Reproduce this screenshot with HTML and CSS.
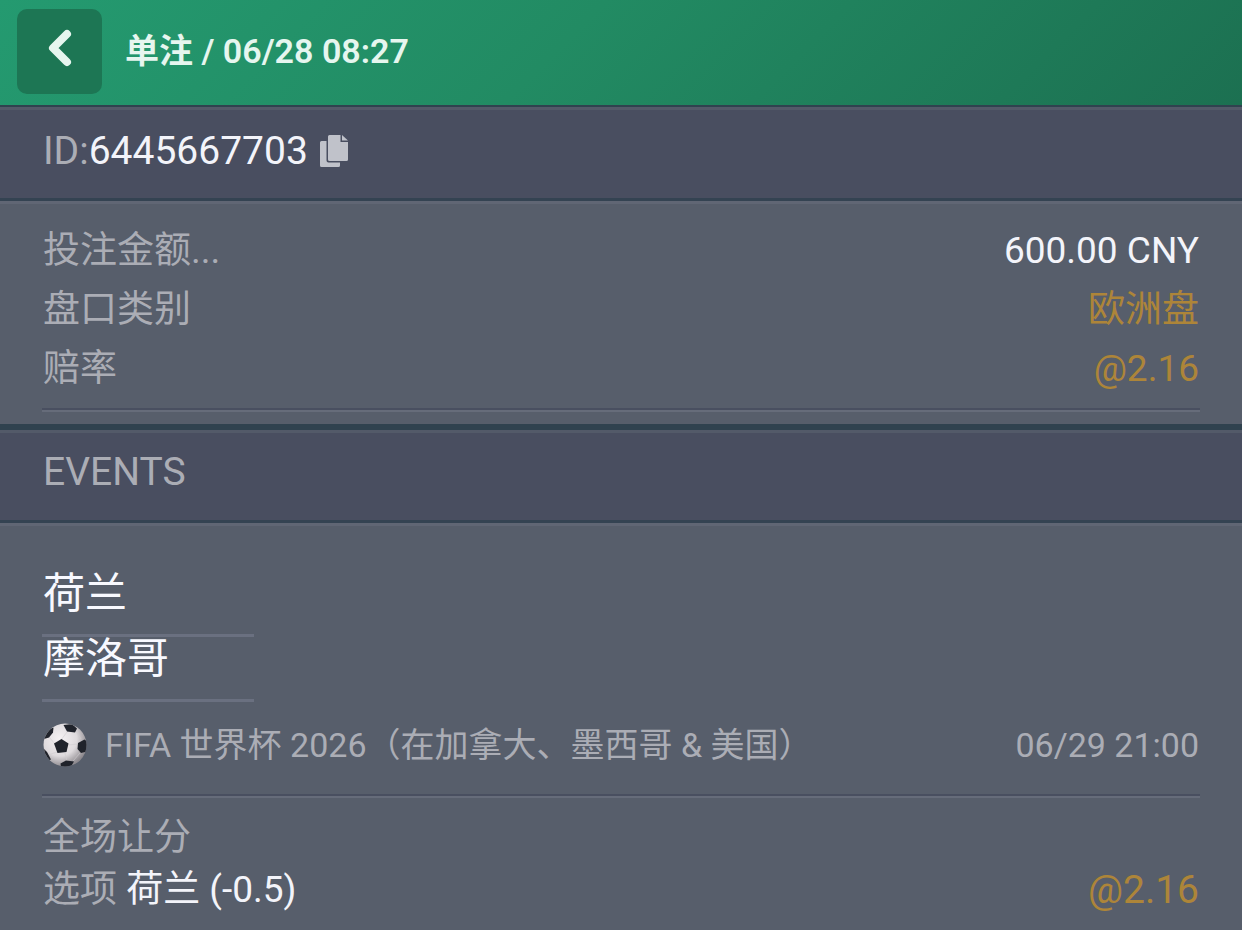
FILE: index.html
```html
<!DOCTYPE html>
<html lang="zh-CN">
  <head>
    <meta charset="UTF-8" />
    <meta name="viewport" content="width=device-width, initial-scale=1.0" />
    <title>单注</title>
    <link rel="stylesheet" href="styles.css">
  </head>
  <body>
    <header class="topbar">
      <button class="back" type="button" aria-label="返回">
        <svg width="24" height="38" viewBox="0 0 24 38">
          <path d="M19 5 L5 19 L19 33" />
        </svg>
      </button>
      <h1>单注 / 06/28 08:27</h1>
    </header>

    <section class="bar">
      <span>ID:</span><span class="white">6445667703</span>
      <button class="copy" type="button" aria-label="复制">
        <svg width="28" height="32" viewBox="0 0 28 32">
          <path d="M1.500 6H6.500V25.500Q6.500 27.500 8.500 27.500H20V30.500Q20 32 18.500 32H1.500Q0 32 0 30.500V7.500Q0 6 1.500 6Z" />
          <path d="M9.500 0H20.500V7H28V24.500Q28 26 26.500 26H9.500Q8 26 8 24.500V1.500Q8 0 9.500 0Z" />
          <path d="M22 0L28 5.500H22Z" />
        </svg>
      </button>
    </section>

    <section class="details">
      <dl>
        <div class="row">
          <dt>投注金额...</dt>
          <dd class="white">600.00 CNY</dd>
        </div>
        <div class="row">
          <dt>盘口类别</dt>
          <dd class="gold">欧洲盘</dd>
        </div>
        <div class="row">
          <dt>赔率</dt>
          <dd class="gold">@2.16</dd>
        </div>
      </dl>
    </section>

    <h2 class="bar events">EVENTS</h2>

    <main class="event">
      <div class="teams">
        <p>荷兰</p>
        <p>摩洛哥</p>
      </div>
      <div class="league">
        <svg class="ball" width="44" height="44" viewBox="0 0 44 44">
          <defs>
            <radialGradient id="shade" cx="38%" cy="36%" r="66%">
              <stop offset="0" stop-color="#f5f1f3" />
              <stop offset="0.6" stop-color="#dedadd" />
              <stop offset="1" stop-color="#8d898e" />
            </radialGradient>
            <clipPath id="round"><circle cx="22" cy="22" r="21.500" /></clipPath>
          </defs>
          <circle cx="22" cy="22" r="21.500" fill="url(#shade)" />
          <g clip-path="url(#round)">
            <g fill="none" stroke="#d0ccd0" stroke-width="0.6">
              <path d="M18 17L24 9M25 22L35 21M22 30L24 38M14 29L5 32M12 21L6 14M33 8L38 16M37 30L30 38" />
            </g>
            <g fill="#20232b">
              <path d="M11 20.500L18.500 16L25.500 20.500L23.500 29L14.500 30Z" />
              <path d="M20.500 2L29 1L34 5.500L32 9.500L24 8.500Z" />
              <path d="M35 20L41.500 16.500L46 20V28L38 30L34.500 26Z" />
              <path d="M10.500 4.500L10 9.500L6 14.500L1 16L0 8Z" />
              <path d="M0 25L4 29L8 36.500L4 38L-2 31Z" />
              <path d="M17.500 40.500L23 37.500L31 38.500L28 43.500L18 45Z" />
            </g>
          </g>
        </svg>
        <span>FIFA 世界杯 2026（在加拿大、墨西哥 &amp; 美国）</span>
        <time>06/29 21:00</time>
      </div>
      <div class="market">
        <p>全场让分</p>
        <div class="pick">
          <p>选项 <span class="white">荷兰 (-0.5)</span></p>
          <span class="gold odds">@2.16</span>
        </div>
      </div>
    </main>
  </body>
</html>
```
FILE: styles.css
```css
* {
  margin: 0;
  box-sizing: border-box;
}

body {
  background-color: #575e6b;
  color: #abadb5;
  font-family: Roboto, "Noto Sans CJK SC", sans-serif;
  font-size: 37px;
  line-height: 52px;
}

button {
  border: none;
  padding: 0;
  cursor: pointer;
}

.white {
  color: #f3f4fa;
}

.gold {
  color: #ad8539;
}

.topbar {
  display: flex;
  align-items: center;
  gap: 23px;
  height: 105px;
  padding: 0 17px 3px;
  background: linear-gradient(135deg, #249a70 0%, #228b63 45%, #1c7051 100%);
}

.back {
  display: flex;
  align-items: center;
  justify-content: center;
  width: 85px;
  height: 85px;
  padding-bottom: 6px;
  border-radius: 10px;
  background-color: #1d7654;
}

.back path {
  fill: none;
  stroke: #e6f6ef;
  stroke-width: 8;
  stroke-linecap: round;
  stroke-linejoin: round;
}

.topbar h1 {
  color: #e6f6ef;
  font-size: 34px;
  font-weight: 600;
}

.bar {
  display: flex;
  align-items: center;
  height: 96px;
  padding: 0 43px 4px;
  border-top: 2px solid #30424f;
  border-bottom: 3px solid #344352;
  background-color: #494e60;
  box-shadow: inset 0 3px #535a69;
  font-size: 39px;
  font-weight: 400;
}

.copy {
  display: flex;
  margin-left: 12px;
  background: none;
}

.copy path {
  fill: #c0c2ca;
}

.details {
  padding: 24px 42px 12px;
  box-shadow: inset 0 3px #606674;
}

.details dl {
  padding-bottom: 8px;
  border-bottom: 2px solid #666c7a;
  box-shadow: inset 0 -2px #494f60;
}

.row {
  display: flex;
  justify-content: space-between;
  height: 59px;
}

.row dt,
.row dd {
  padding: 0 1px;
}

.events {
  height: 99px;
  padding-bottom: 6px;
  border-top-width: 6px;
}

.event {
  padding: 49px 42px 16px;
  box-shadow: inset 0 3px #606674;
}

.teams {
  width: 212px;
  color: #f8f9ff;
  font-size: 42px;
}

.teams p {
  height: 65px;
  padding-left: 1px;
  border-bottom: 3px solid #6a7080;
  line-height: 44px;
}

.league {
  display: flex;
  align-items: center;
  height: 96px;
  padding: 0 1px 8px;
  border-bottom: 2px solid #666c7a;
  box-shadow: inset 0 -2px #494f60;
  font-size: 34px;
}

.ball {
  flex: none;
  margin-right: 18px;
}

.league time {
  margin-left: auto;
}

.market {
  padding: 14px 1px 0;
}

.pick {
  display: flex;
  justify-content: space-between;
}

.odds {
  font-size: 39px;
}
```
